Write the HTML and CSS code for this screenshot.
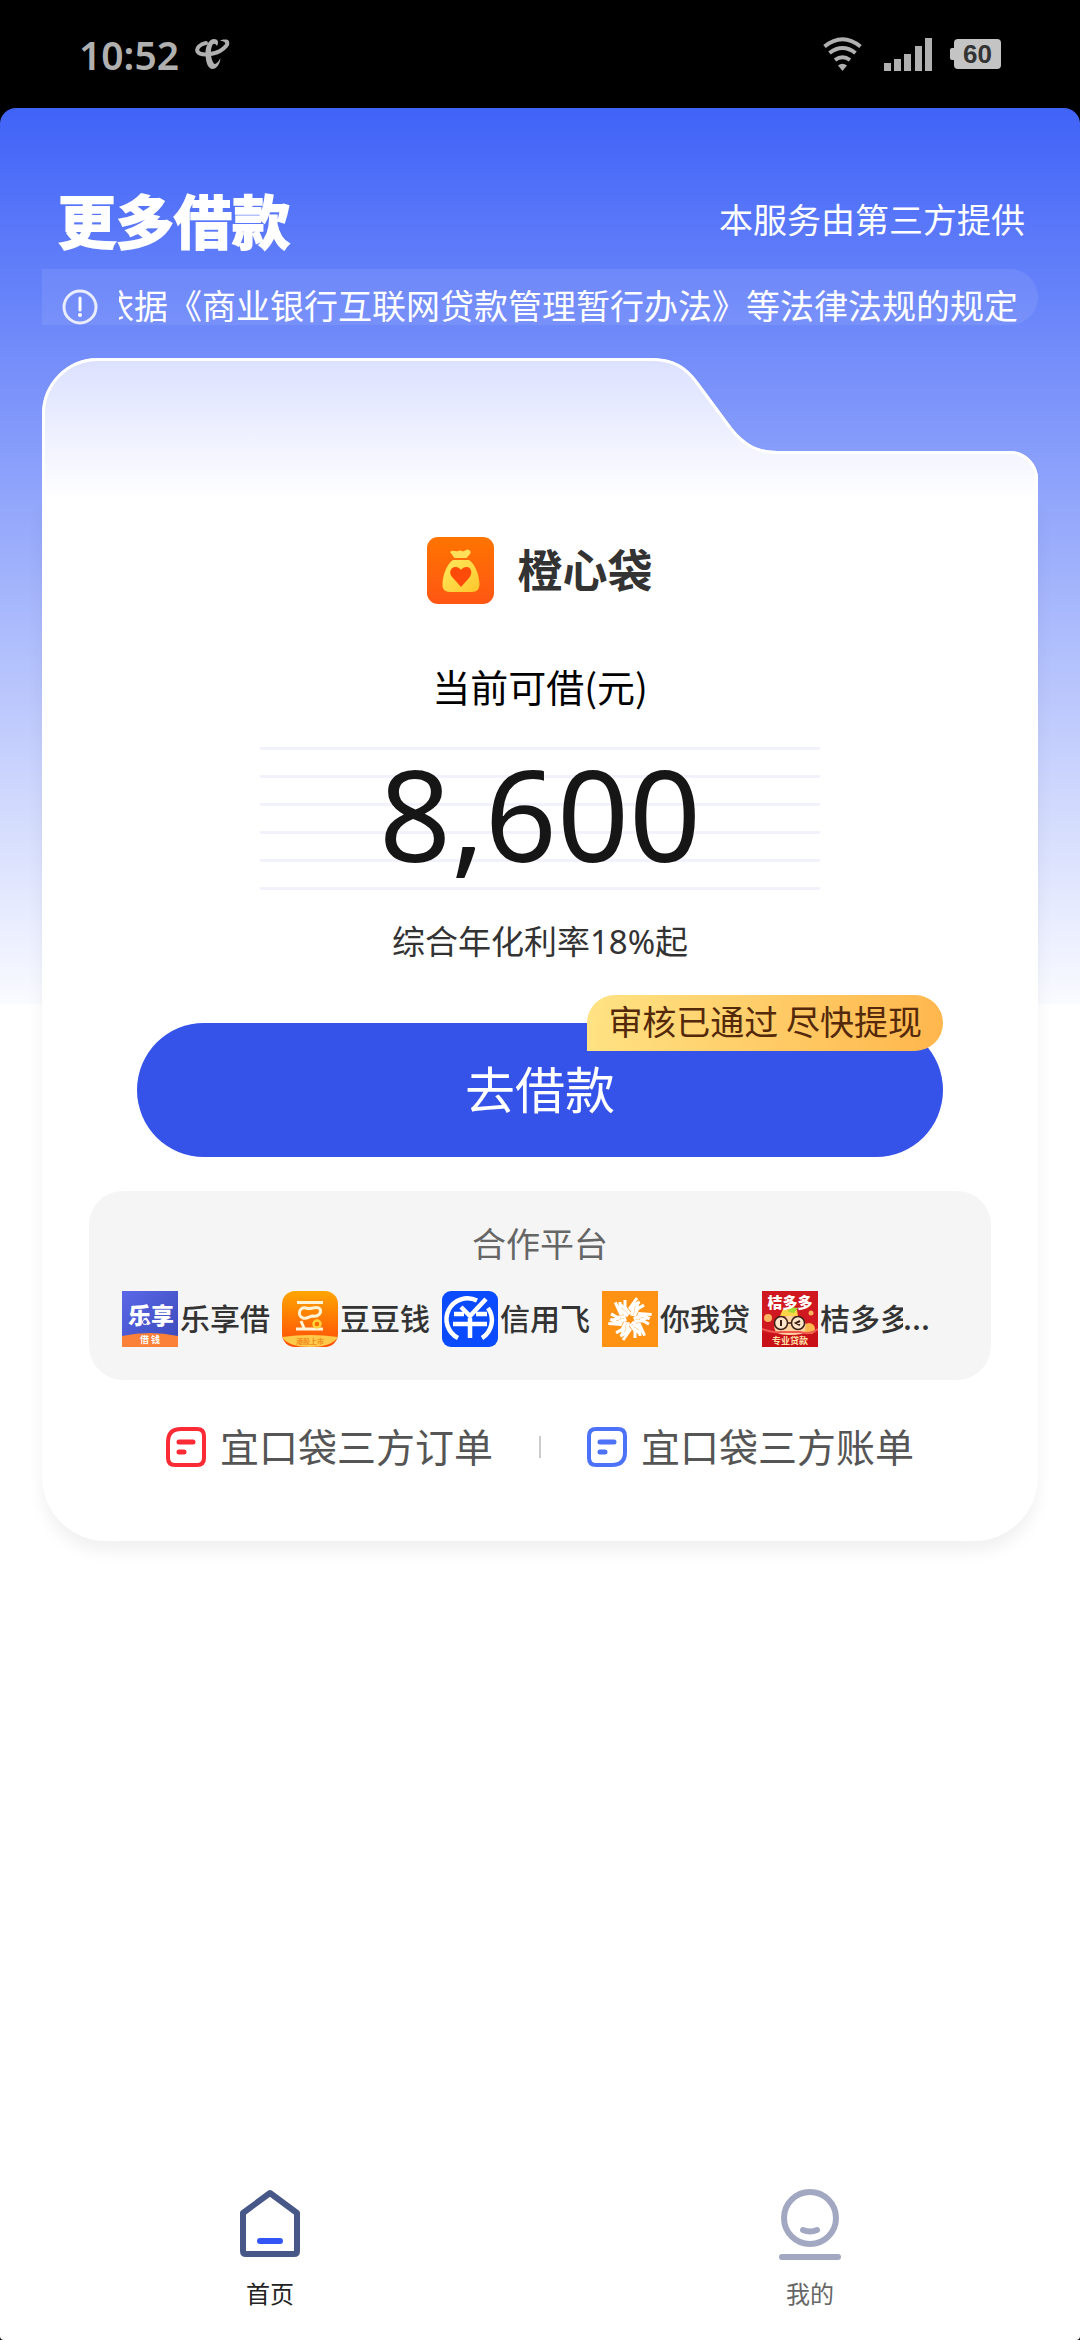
FILE: index.html
```html
<!DOCTYPE html>
<html lang="zh-CN">
<head>
<meta charset="utf-8">
<meta name="viewport" content="width=device-width, initial-scale=1">
<title>更多借款</title>
<link rel="stylesheet" href="styles.css">
</head>
<body>
<div class="status">
  <div class="status-side">
    <span class="clock">10:52</span>
    <svg class="carrier" width="35" height="30" viewBox="0 0 35 30" aria-hidden="true">
      <path fill="none" stroke="#b0b0b0" stroke-width="4" stroke-linecap="round" d="M11 4C5 5 1 9 2.500 12.500C5 17 18 16 25 12C30 9 34 5 31.500 2.500"/>
      <path fill="#b0b0b0" d="M22 7C24 3 23 0 19 0C14 0 10 7 10.500 16C11 24 13 29 17 30C22 30 25 25 25.500 19C22 25 20 26 18.500 24C16 20 15 12 17 7C18 4 20 4 22 7Z"/>
      <path fill="#b0b0b0" d="M25 2C28 0 33 0 34 3C34 5 34 7 32 8C32 4 30 2 25 2Z"/>
    </svg>
  </div>
  <div class="status-side status-right">
    <svg width="39" height="34" viewBox="0 0 39 34" aria-hidden="true">
      <g fill="none" stroke="#b0b0b0" stroke-width="4"><path d="M1.500 9.500Q19.500 -5 37.500 9.500"/><path d="M6.500 16Q19.500 6 32.500 16"/><path d="M12 23Q19.500 17.500 27 23"/></g>
      <path fill="#b0b0b0" d="M15 28.500Q19.500 25 24 28.500L19.500 34Z"/>
    </svg>
    <svg width="48" height="33" viewBox="0 0 48 33" fill="#b0b0b0" aria-hidden="true">
      <rect y="25" width="7" height="8"/><rect x="10" y="21" width="7" height="12"/><rect x="20" y="16" width="7" height="17"/><rect x="31" y="8" width="7" height="25"/><rect x="41" width="7" height="33"/>
    </svg>
    <span class="battery">60</span>
  </div>
</div>

<div class="app">
  <main class="main">
    <header class="head">
      <h1>更多借款</h1>
      <span class="provider">本服务由第三方提供</span>
    </header>
    <div class="notice">
      <svg class="notice-icon" width="36" height="36" viewBox="0 0 36 36" aria-hidden="true">
        <circle cx="18" cy="18" r="16" fill="none" stroke="#e9edff" stroke-width="3"/>
        <path d="M18 9V21" stroke="#fff" stroke-width="3" stroke-linecap="round"/><circle cx="18" cy="26" r="2" fill="#fff"/>
      </svg>
      <div class="ticker"><span>依据《商业银行互联网贷款管理暂行办法》等法律法规的规定</span></div>
    </div>

    <section class="card">
      <svg class="card-tab" viewBox="0 0 996 142" preserveAspectRatio="none" aria-hidden="true">
        <defs><linearGradient id="tab" x1="0" y1="0" x2="0" y2="1"><stop offset="0" stop-color="#dbe0ff"/><stop offset="1" stop-color="#fff"/></linearGradient></defs>
        <path fill="url(#tab)" d="M0 142V56A56 56 0 0 1 56 0H609C632 0 645 9 656 24L690 70C703 86 715 93 735 93H968A28 28 0 0 1 996 121V142Z"/>
        <path fill="none" stroke="#fff" stroke-width="3" d="M1.500 142V56A54.500 54.500 0 0 1 56 1.500H609C632 1.500 644 10 655 25L689 71C702 87 715 94.500 735 94.500H968A26.500 26.500 0 0 1 994.500 121V142"/>
      </svg>
      <div class="card-body">
        <div class="brand">
          <svg width="67" height="67" viewBox="0 0 67 67" aria-hidden="true">
            <defs><linearGradient id="or" x1="0" y1="0" x2="0" y2="1"><stop offset="0" stop-color="#ff7400"/><stop offset="1" stop-color="#ff5614"/></linearGradient>
            <linearGradient id="ye" x1="0" y1="0" x2="1" y2="1"><stop offset="0" stop-color="#ffe95e"/><stop offset="1" stop-color="#ffc62b"/></linearGradient></defs>
            <rect width="67" height="67" rx="11" fill="url(#or)"/>
            <path fill="#ffe05a" d="M23 15C26 12 28 15 31 14C34 12 36 16 39 13C42 11 45 15 43 17L39.500 21H27.500Z"/>
            <path fill="url(#ye)" d="M26 23H42C48 27 52 37 52.500 47C52.500 52 50 55 45 55H23C18 55 15 52 15.500 47C16 37 20 27 26 23Z"/>
            <path fill="#ff4b0a" d="M34 50L26 41C20 35 25 29 29 30C32 30 34 33 34 33C34 33 36 30 39 30C43 29 47 35 42 41Z"/>
          </svg>
          <h2>橙心袋</h2>
        </div>
        <p class="quota-label">当前可借(元)</p>
        <div class="quota">8,600</div>
        <p class="rate">综合年化利率18%起</p>
        <div class="action">
          <button class="borrow" type="button">去借款</button>
          <span class="tip">审核已通过 尽快提现</span>
        </div>

        <section class="partners">
          <h3>合作平台</h3>
          <ul>
            <li>
              <svg width="56" height="56" viewBox="0 0 56 56" aria-hidden="true">
                <defs><linearGradient id="lx" x1="0" y1="0" x2="1" y2="1"><stop offset="0" stop-color="#5a68e8"/><stop offset="1" stop-color="#3a49b8"/></linearGradient></defs>
                <rect width="56" height="56" fill="url(#lx)"/><path fill="#fb8038" d="M0 45Q28 39 56 45V56H0Z"/>
                <text class="ico-lx" x="29" y="33">乐享</text><circle cx="23" cy="31" r="2.500" fill="#4655cf" stroke="#fff"/>
                <text class="ico-small" x="28" y="52">借 钱</text>
              </svg><span>乐享借</span>
            </li>
            <li>
              <svg width="56" height="56" viewBox="0 0 56 56" aria-hidden="true">
                <defs><linearGradient id="dd" x1="0" y1="0" x2="0" y2="1"><stop offset="0" stop-color="#ffa600"/><stop offset="1" stop-color="#ff4b08"/></linearGradient><clipPath id="ddc"><rect width="56" height="56" rx="13"/></clipPath></defs>
                <g clip-path="url(#ddc)"><rect width="56" height="56" fill="url(#dd)"/><path fill="#ffc94a" d="M0 46Q28 42 56 46Q50 56 28 56Q6 56 0 46Z"/></g>
                <g fill="none" stroke="#fff3d5" stroke-width="3"><path d="M15 11.500H41"/><path d="M24 17C17 15 15 25 21 27C26 28 27 25 31 25C36 26 40 22 38 18C35 14 29 19 24 17Z"/><path d="M19 30L22 37M14 38H41"/></g>
                <circle cx="35" cy="33" r="3.500" fill="#ff6b00" stroke="#ffd23c" stroke-width="2.500"/>
                <text class="ico-small ico-dd" x="28" y="53">港股上市</text>
              </svg><span>豆豆钱</span>
            </li>
            <li>
              <svg width="56" height="56" viewBox="0 0 56 56" aria-hidden="true">
                <rect width="56" height="56" rx="9" fill="#0a4bff"/>
                <g fill="none" stroke="#fff" stroke-width="4.500"><path d="M16 47A21 21 0 0 1 35 9.500M46 17A21 21 0 0 1 40 47"/><path d="M12 23H22M34 23H45M11 33H45M28 27V47"/><path d="M19 16L28 25L44 8"/></g>
              </svg><span>信用飞</span>
            </li>
            <li>
              <svg width="56" height="56" viewBox="0 0 56 56" aria-hidden="true">
                <defs><g id="petal"><path d="M26 25L18 18V11M28 23L23 16V9M32 22L28 17L35 7M24 19L18 13"/></g></defs>
                <rect width="56" height="56" fill="#ff9213"/>
                <g fill="none" stroke="#fff" stroke-width="3"><use href="#petal"/><use href="#petal" transform="rotate(60 28 28)"/><use href="#petal" transform="rotate(120 28 28)"/><use href="#petal" transform="rotate(180 28 28)"/><use href="#petal" transform="rotate(240 28 28)"/><use href="#petal" transform="rotate(300 28 28)"/></g>
              </svg><span>你我贷</span>
            </li>
            <li>
              <svg width="56" height="56" viewBox="0 0 56 56" aria-hidden="true">
                <rect width="56" height="56" fill="#cf1820"/>
                <circle cx="6" cy="27" r="4" fill="#ffb45e"/><circle cx="47" cy="38" r="6" fill="#ffb74f"/><circle cx="49" cy="22" r="2.500" fill="#ffb45e"/>
                <path fill="#ffd3a0" d="M13 31C15 23 40 23 43 31C46 44 38 44 28 44C18 44 10 43 13 31Z"/>
                <path fill="#ffd548" d="M18 25L21 18L35 19L36 25Z"/><path fill="#a5d936" d="M26 21L28 16L36 17L32 22Z"/>
                <g fill="#ffe6c8" stroke="#3a2018" stroke-width="1.500"><circle cx="19" cy="32" r="6.500"/><circle cx="36" cy="32" r="6.500"/><path d="M25.500 32H29.500"/></g>
                <path fill="none" stroke="#3a2018" stroke-width="2" d="M19 29V35M38 30L34 32L38 34"/>
                <path fill="none" stroke="#f05a50" stroke-width="2" d="M0 38Q10 42 18 41H38Q48 44 56 38"/>
                <path fill="#c81018" d="M0 42Q28 46 56 42V56H0Z"/>
                <text class="ico-jdd" x="28" y="17">桔多多</text><text class="ico-small ico-loan" x="28" y="53">专业贷款</text>
              </svg><span class="cut">桔多多</span><span class="dots">...</span>
            </li>
          </ul>
        </section>

        <nav class="records">
          <a href="#orders">
            <svg width="40" height="40" viewBox="0 0 40 40" fill="none" stroke="#fb2b35" aria-hidden="true"><path stroke-width="4" d="M15 2H31Q38 2 38 9V31Q38 38 31 38H9Q2 38 2 31V15Q2 2 15 2Z"/><path stroke-width="5" stroke-linecap="round" d="M13 15H27M13 25H18"/></svg>
            <span>宜口袋三方订单</span>
          </a>
          <i class="divider"></i>
          <a href="#bills">
            <svg width="40" height="40" viewBox="0 0 40 40" fill="none" stroke="#4c72f8" aria-hidden="true"><path stroke-width="4" d="M9 2H31Q38 2 38 9V25Q38 38 25 38H9Q2 38 2 31V9Q2 2 9 2Z"/><path stroke-width="5" stroke-linecap="round" d="M13 15H27M13 25H18"/></svg>
            <span>宜口袋三方账单</span>
          </a>
        </nav>
      </div>
    </section>
  </main>

  <nav class="tabs">
    <a class="active" href="#home">
      <svg width="64" height="72" viewBox="0 0 64 72" fill="none" stroke-linejoin="round" stroke-linecap="round" aria-hidden="true"><path stroke="#475788" stroke-width="6" d="M32 5L59 25V63Q59 66 56 66H8Q5 66 5 63V25Z"/><path stroke="#3355f5" stroke-width="6" d="M22 53H42"/></svg>
      <span>首页</span>
    </a>
    <a href="#me">
      <svg width="64" height="72" viewBox="0 0 64 72" fill="none" stroke="#a3a8c2" stroke-width="6" stroke-linecap="round" aria-hidden="true"><circle cx="32" cy="30" r="26"/><path d="M25 42Q32 45 39 42M4 69H60"/></svg>
      <span>我的</span>
    </a>
  </nav>
</div>
</body>
</html>
```
FILE: styles.css
```css
* { box-sizing: border-box; }
body {
  margin: 0;
  min-height: 100vh;
  display: flex;
  flex-direction: column;
  background: #000;
  font-family: "Noto Sans CJK SC", "Noto Sans", sans-serif;
}
h1, h2, h3, p, ul { margin: 0; padding: 0; }
svg { display: block; flex: none; }
a { color: inherit; text-decoration: none; }

.status {
  height: 108px;
  padding: 0 79px;
  display: flex;
  justify-content: space-between;
  align-items: center;
}
.status-side { display: flex; align-items: center; gap: 16px; }
.status-right { gap: 22px; }
.clock {
  padding-top: 2px;
  font-family: "Noto Sans", sans-serif;
  font-size: 39px;
  line-height: 54px;
  font-weight: 600;
  color: #b0b0b0;
}
.battery {
  position: relative;
  width: 47px;
  height: 30px;
  border-radius: 4px;
  background: #c4c4c4;
  color: #333;
  font: bold 26px/30px "Liberation Sans", sans-serif;
  text-align: center;
}
.battery::before {
  content: "";
  position: absolute;
  left: -4px;
  top: 9px;
  width: 4px;
  height: 12px;
  border-radius: 2px 0 0 2px;
  background: #c4c4c4;
}

.app {
  flex: 1;
  display: flex;
  flex-direction: column;
  justify-content: space-between;
  border-radius: 16px 16px 4px 4px;
  background: #fff linear-gradient(#4063f8, #fafbff) no-repeat top / 100% 896px;
}
.main { padding: 81px 42px 40px; }
.head {
  display: flex;
  justify-content: space-between;
  align-items: center;
  padding: 0 13px 0 16px;
  color: #fff;
}
h1 {
  font-size: 58px;
  line-height: 60px;
  font-weight: 700;
  -webkit-text-stroke: 2px #fff;
  stroke-linejoin: round;
}
.provider { font-size: 34px; line-height: 40px; }
.notice {
  height: 56px;
  margin: 20px 0 33px;
  padding: 0 20px;
  display: flex;
  align-items: flex-end;
  gap: 21px;
  border-radius: 0 28px 28px 0;
  background: rgba(255, 255, 255, .08);
  color: #fff;
}
.ticker {
  flex: 1;
  min-width: 0;
  display: flex;
  justify-content: flex-end;
  overflow: hidden;
  white-space: nowrap;
  font-size: 34px;
  line-height: 40px;
}

.card-tab { width: 100%; height: 142px; }
.card-body {
  padding: 37px 47px 72px;
  border-radius: 0 0 64px 64px;
  background: #fff;
  box-shadow: 0 10px 16px rgba(0, 0, 0, .06);
  text-align: center;
}
.brand { display: flex; justify-content: center; align-items: center; gap: 23px; }
h2 {
  padding-bottom: 4px;
  font-size: 45px;
  line-height: 60px;
  font-weight: 700;
  color: #333;
}
.quota-label { margin-top: 58px; font-size: 38px; line-height: 48px; color: #000; }
.quota {
  width: 560px;
  height: 143px;
  margin: 37px auto 32px;
  background: repeating-linear-gradient(#f2f2fc 0 3px, transparent 3px 28px);
  font-family: "Noto Sans", sans-serif;
  font-size: 126px;
  line-height: 132px;
  font-weight: 400;
  color: #161616;
}
.rate {
  font-family: "Noto Sans", "Noto Sans CJK SC", sans-serif;
  font-size: 33px;
  line-height: 40px;
  color: #333;
}
.action { position: relative; margin: 61px 48px 34px; }
.borrow {
  display: block;
  width: 100%;
  height: 134px;
  padding: 0 0 6px;
  border: 0;
  border-radius: 67px;
  background: #3552e9;
  color: #fff;
  font: 400 50px/60px "Noto Sans CJK SC", sans-serif;
}
.tip {
  position: absolute;
  right: 0;
  top: -28px;
  padding: 0 21px 4px;
  border-radius: 28px 28px 28px 0;
  background: linear-gradient(100deg, #ffe384, #ffb64c);
  color: #54290a;
  font-size: 34px;
  line-height: 52px;
}

.partners { padding: 32px 33px 33px; border-radius: 34px; background: #f5f5f5; }
h3 { font-size: 34px; line-height: 40px; font-weight: 400; color: #666; }
.partners ul { margin-top: 28px; display: flex; gap: 12px; list-style: none; }
.partners li {
  display: flex;
  align-items: center;
  font-size: 30px;
  line-height: 40px;
  font-weight: 500;
  color: #333;
  white-space: nowrap;
}
.partners li svg { margin-right: 2px; }
.partners span { padding-bottom: 4px; }
.cut { width: 83px; overflow: hidden; }
.partners text { text-anchor: middle; fill: #fff; }
.ico-lx { font-size: 23px; font-weight: 900; }
.ico-small { font-size: 9px; font-weight: 700; }
.partners .ico-dd { font-size: 7px; fill: #f28a1c; }
.ico-jdd { font-size: 15px; font-weight: 900; }
.partners .ico-loan { fill: #ffe0a8; }

.records {
  margin-top: 45px;
  display: flex;
  justify-content: center;
  align-items: center;
  gap: 46px;
  font-size: 39px;
  line-height: 40px;
  color: #555;
}
.records a { display: flex; align-items: center; gap: 14px; }
.records span { padding-bottom: 4px; }
.divider { width: 2px; height: 22px; background: #ccc; }

.tabs { display: flex; padding-bottom: 31px; }
.tabs a {
  flex: 1;
  display: flex;
  flex-direction: column;
  align-items: center;
  gap: 17px;
  font-size: 24px;
  line-height: 32px;
  color: #666;
}
.tabs .active { color: #222; }
```
